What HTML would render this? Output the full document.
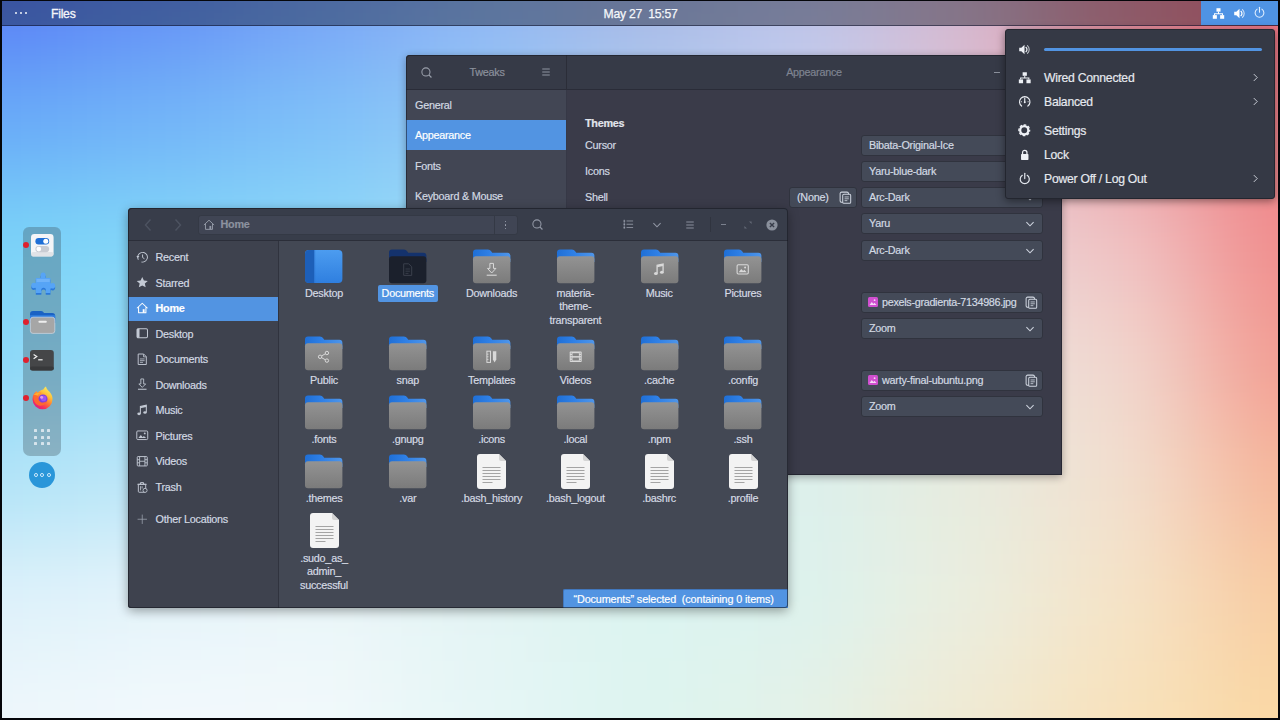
<!DOCTYPE html><html><head><meta charset="utf-8"><title>Desktop</title><style>
*{box-sizing:border-box;margin:0;padding:0}
html,body{width:1280px;height:720px;overflow:hidden;background:#05060a}
body{position:relative;font-family:"Liberation Sans",sans-serif;color:#d3dae3;font-size:10.8px;letter-spacing:-.25px;line-height:14px;-webkit-text-stroke:.18px}
body>*{position:absolute}
.b{position:absolute}
.t{position:absolute;white-space:nowrap;line-height:14px;height:14px}
.c{transform:translateX(-50%);text-align:center}
.s{font-size:12.2px;letter-spacing:-.25px;color:#e6e9ef}
#wall{left:2px;top:1px;width:1276px;height:717px;overflow:hidden}
svg{display:block;overflow:visible}
.ic{position:absolute}
.cb{position:absolute;left:861px;width:182px;height:21px;background:#444a58;border:1px solid #30343f;border-radius:3px}
.dim{color:#8c919d}
</style></head><body>
<svg width="0" height="0" style="left:0;top:0"><defs><linearGradient id="gfb" x1="0" y1="0" x2="0" y2="1"><stop offset="0" stop-color="#939393"/><stop offset="1" stop-color="#7b7b7b"/></linearGradient><linearGradient id="gft" x1="0" y1="0" x2="1" y2="0"><stop offset="0" stop-color="#1f6fd6"/><stop offset=".45" stop-color="#2f80e6"/><stop offset="1" stop-color="#4f95e8"/></linearGradient><linearGradient id="gdk" x1="0" y1="0" x2="0" y2="1"><stop offset="0" stop-color="#4c9cf0"/><stop offset="1" stop-color="#2f7fdf"/></linearGradient></defs></svg>
<svg id="wall" width="1276" height="717" viewBox="2 1 1276 717" preserveAspectRatio="none"><defs><filter id="wb" x="-10%" y="-10%" width="120%" height="120%" color-interpolation-filters="sRGB"><feGaussianBlur stdDeviation="58 44"/></filter></defs><g filter="url(#wb)"><rect x="-300" y="-300" width="381" height="361" fill="#5a80f6"/><rect x="80" y="-300" width="161" height="361" fill="#6490f6"/><rect x="240" y="-300" width="161" height="361" fill="#78a4f6"/><rect x="400" y="-300" width="161" height="361" fill="#90b6f4"/><rect x="560" y="-300" width="161" height="361" fill="#a6b8e6"/><rect x="720" y="-300" width="161" height="361" fill="#bcc4ea"/><rect x="880" y="-300" width="161" height="361" fill="#d4b8d0"/><rect x="1040" y="-300" width="161" height="361" fill="#e08c9c"/><rect x="1200" y="-300" width="381" height="361" fill="#e87080"/><rect x="-300" y="60" width="381" height="121" fill="#68aaf8"/><rect x="80" y="60" width="161" height="121" fill="#72b4f8"/><rect x="240" y="60" width="161" height="121" fill="#7ec0f8"/><rect x="400" y="60" width="161" height="121" fill="#94caf6"/><rect x="560" y="60" width="161" height="121" fill="#b2cef0"/><rect x="720" y="60" width="161" height="121" fill="#c6d0ee"/><rect x="880" y="60" width="161" height="121" fill="#dcc6d8"/><rect x="1040" y="60" width="161" height="121" fill="#ea9ca4"/><rect x="1200" y="60" width="381" height="121" fill="#ee8088"/><rect x="-300" y="180" width="381" height="121" fill="#7ad3f8"/><rect x="80" y="180" width="161" height="121" fill="#82d6f8"/><rect x="240" y="180" width="161" height="121" fill="#8cd8f8"/><rect x="400" y="180" width="161" height="121" fill="#a0dcf6"/><rect x="560" y="180" width="161" height="121" fill="#c0dcf0"/><rect x="720" y="180" width="161" height="121" fill="#d4dcec"/><rect x="880" y="180" width="161" height="121" fill="#e8d4d8"/><rect x="1040" y="180" width="161" height="121" fill="#f0c3c4"/><rect x="1200" y="180" width="381" height="121" fill="#f08c8c"/><rect x="-300" y="300" width="381" height="121" fill="#8cd8f8"/><rect x="80" y="300" width="161" height="121" fill="#98dcf8"/><rect x="240" y="300" width="161" height="121" fill="#a8e0f6"/><rect x="400" y="300" width="161" height="121" fill="#bce2f2"/><rect x="560" y="300" width="161" height="121" fill="#d0e6f0"/><rect x="720" y="300" width="161" height="121" fill="#dce6ec"/><rect x="880" y="300" width="161" height="121" fill="#e8e0dc"/><rect x="1040" y="300" width="161" height="121" fill="#f1d8d0"/><rect x="1200" y="300" width="381" height="121" fill="#f29c92"/><rect x="-300" y="420" width="381" height="121" fill="#b2e4f8"/><rect x="80" y="420" width="161" height="121" fill="#bee7f8"/><rect x="240" y="420" width="161" height="121" fill="#cceaf6"/><rect x="400" y="420" width="161" height="121" fill="#d0ecf2"/><rect x="560" y="420" width="161" height="121" fill="#d8f0f0"/><rect x="720" y="420" width="161" height="121" fill="#dcf0ec"/><rect x="880" y="420" width="161" height="121" fill="#e6ecdf"/><rect x="1040" y="420" width="161" height="121" fill="#f2e0d0"/><rect x="1200" y="420" width="381" height="121" fill="#f5b69a"/><rect x="-300" y="540" width="381" height="121" fill="#def1fa"/><rect x="80" y="540" width="161" height="121" fill="#e6f4fa"/><rect x="240" y="540" width="161" height="121" fill="#ebf6f9"/><rect x="400" y="540" width="161" height="121" fill="#e4f4f4"/><rect x="560" y="540" width="161" height="121" fill="#dcf4f0"/><rect x="720" y="540" width="161" height="121" fill="#dcf2ee"/><rect x="880" y="540" width="161" height="121" fill="#eaeee0"/><rect x="1040" y="540" width="161" height="121" fill="#f5e4c8"/><rect x="1200" y="540" width="381" height="121" fill="#f8cca2"/><rect x="-300" y="660" width="381" height="361" fill="#eef7fb"/><rect x="80" y="660" width="161" height="361" fill="#f2f9fc"/><rect x="240" y="660" width="161" height="361" fill="#f2f9fb"/><rect x="400" y="660" width="161" height="361" fill="#e6f6f6"/><rect x="560" y="660" width="161" height="361" fill="#ddf4f0"/><rect x="720" y="660" width="161" height="361" fill="#e4f2e8"/><rect x="880" y="660" width="161" height="361" fill="#f0ead4"/><rect x="1040" y="660" width="161" height="361" fill="#f8e2bc"/><rect x="1200" y="660" width="381" height="361" fill="#fad8a4"/></g></svg>
<div class="b" style="left:2px;top:1px;width:1276px;height:25px;background:rgba(3,5,18,.375);border-bottom:1px solid rgba(8,12,40,.5)"></div>
<div class="b" style="left:1201px;top:1px;width:77px;height:24px;background:#4f93e4"></div>
<div class="b" style="left:14.5px;top:12px;width:2.4px;height:2.4px;background:#f2f4f8;border-radius:50%"></div>
<div class="b" style="left:19.5px;top:12px;width:2.4px;height:2.4px;background:#f2f4f8;border-radius:50%"></div>
<div class="b" style="left:24.5px;top:12px;width:2.4px;height:2.4px;background:#f2f4f8;border-radius:50%"></div>
<div class="t s" style="left:51px;top:6.699999999999999px;color:#f4f6fa;-webkit-text-stroke:.3px #f4f6fa">Files</div>
<div class="t s c" style="left:640.5px;top:6.699999999999999px;color:#f4f6fa;-webkit-text-stroke:.25px #f4f6fa">May 27&nbsp; 15:57</div>
<svg class="ic" style="left:1211.5px;top:6.5px;" width="13" height="13" viewBox="0 0 16 16"><g fill="#fff"><rect x="5.5" y="1.5" width="5" height="4.2"/><rect x="1" y="10" width="5" height="4.5"/><rect x="10" y="10" width="5" height="4.5"/><path d="M7.4 5.5h1.2v2.1h4.9v2.6h-1.2v-1.4H3.7v1.4H2.5V7.6h4.9z"/></g></svg>
<svg class="ic" style="left:1233.0px;top:6.5px;" width="13" height="13" viewBox="0 0 16 16"><path d="M1.5 5.8h2.6L8 2.2v11.6L4.1 10.2H1.5z" fill="#fff"/><path d="M9.8 5.3a3.6 3.6 0 0 1 0 5.4" fill="none" stroke="#fff" stroke-width="1.5" stroke-linecap="round"/><path d="M11.6 3.2a6.4 6.4 0 0 1 0 9.6" fill="none" stroke="#fff" stroke-width="1.3" stroke-linecap="round" opacity=".75"/></svg>
<svg class="ic" style="left:1253.0px;top:6.1px;" width="13" height="13" viewBox="0 0 16 16"><path d="M5.1 3.9a5.4 5.4 0 1 0 5.8 0" fill="none" stroke="#e4f0ff" stroke-width="1.3" stroke-linecap="round"/><path d="M8 1.6v6.2" stroke="#e4f0ff" stroke-width="1.3" stroke-linecap="round"/></svg>
<div class="b" style="left:406px;top:55px;width:656px;height:420px;background:#3a3b49;border-radius:4px 4px 0 0;box-shadow:0 2px 9px rgba(0,0,0,.33)"></div>
<div class="b" style="left:406px;top:55px;width:656px;height:35px;background:#363a47;border-bottom:1px solid #2a2c38;border-radius:4px 4px 0 0"></div>
<div class="b" style="left:406px;top:90px;width:160px;height:385px;background:#424654"></div>
<div class="b" style="left:566px;top:55px;width:1px;height:35px;background:#2b2d38"></div>
<div class="b" style="left:566px;top:90px;width:1px;height:385px;background:#363846"></div>
<div class="b" style="left:406px;top:120px;width:160px;height:30px;background:#5294e2"></div>
<svg class="ic" style="left:420.0px;top:65.5px;" width="13" height="13" viewBox="0 0 16 16"><circle cx="7.3" cy="7.3" r="5" fill="none" stroke="#9a9fab" stroke-width="1.3"/><path d="M10.9 10.9l3.2 3.2" stroke="#9a9fab" stroke-width="1.5"/></svg>
<div class="t c dim" style="left:487px;top:65px;">Tweaks</div>
<svg class="ic" style="left:540.0px;top:66.0px;" width="12" height="12" viewBox="0 0 16 16"><path d="M3 4h10M3 8h10M3 12h10" stroke="#9a9fab" stroke-width="1.2"/></svg>
<div class="t c dim" style="left:814px;top:65px;color:#7f8491">Appearance</div>
<div class="b" style="left:994px;top:72px;width:6px;height:1px;background:#8c919d"></div>
<div class="t " style="left:415px;top:98px;">General</div>
<div class="t " style="left:415px;top:128px;color:#fff">Appearance</div>
<div class="t " style="left:415px;top:158.5px;">Fonts</div>
<div class="t " style="left:415px;top:189px;">Keyboard &amp; Mouse</div>
<div class="t " style="left:585px;top:116px;font-weight:bold;color:#e1e5ec">Themes</div>
<div class="t " style="left:585px;top:138px;">Cursor</div>
<div class="t " style="left:585px;top:164px;">Icons</div>
<div class="t " style="left:585px;top:190px;">Shell</div>
<div class="b" style="left:861px;top:134.5px;width:182px;height:21px;background:#444a58;border:1px solid #30333e;border-radius:3px"></div>
<div class="t " style="left:869px;top:137.5px;">Bibata-Original-Ice</div>
<svg class="ic" style="left:1024.0px;top:139.5px;" width="12" height="12" viewBox="0 0 16 16"><path d="M3.2 5.6l4.8 4.8 4.8-4.8" fill="none" stroke="#cfd5df" stroke-width="1.4"/></svg>
<div class="b" style="left:861px;top:160.5px;width:182px;height:21px;background:#444a58;border:1px solid #30333e;border-radius:3px"></div>
<div class="t " style="left:869px;top:163.5px;">Yaru-blue-dark</div>
<svg class="ic" style="left:1024.0px;top:165.5px;" width="12" height="12" viewBox="0 0 16 16"><path d="M3.2 5.6l4.8 4.8 4.8-4.8" fill="none" stroke="#cfd5df" stroke-width="1.4"/></svg>
<div class="b" style="left:861px;top:186.5px;width:182px;height:21px;background:#444a58;border:1px solid #30333e;border-radius:3px"></div>
<div class="t " style="left:869px;top:189.5px;">Arc-Dark</div>
<svg class="ic" style="left:1024.0px;top:191.5px;" width="12" height="12" viewBox="0 0 16 16"><path d="M3.2 5.6l4.8 4.8 4.8-4.8" fill="none" stroke="#cfd5df" stroke-width="1.4"/></svg>
<div class="b" style="left:861px;top:213.0px;width:182px;height:21px;background:#444a58;border:1px solid #30333e;border-radius:3px"></div>
<div class="t " style="left:869px;top:216.0px;">Yaru</div>
<svg class="ic" style="left:1024.0px;top:218.0px;" width="12" height="12" viewBox="0 0 16 16"><path d="M3.2 5.6l4.8 4.8 4.8-4.8" fill="none" stroke="#cfd5df" stroke-width="1.4"/></svg>
<div class="b" style="left:861px;top:239.5px;width:182px;height:21px;background:#444a58;border:1px solid #30333e;border-radius:3px"></div>
<div class="t " style="left:869px;top:242.5px;">Arc-Dark</div>
<svg class="ic" style="left:1024.0px;top:244.5px;" width="12" height="12" viewBox="0 0 16 16"><path d="M3.2 5.6l4.8 4.8 4.8-4.8" fill="none" stroke="#cfd5df" stroke-width="1.4"/></svg>
<div class="b" style="left:789px;top:187.0px;width:68px;height:21px;background:#444a58;border:1px solid #30333e;border-radius:3px"></div>
<div class="t " style="left:797px;top:190.0px;">(None)</div>
<svg class="ic" style="left:839.0px;top:191.0px;" width="13" height="13" viewBox="0 0 14 14"><rect x="1.2" y="1.2" width="9" height="11" rx="1.6" fill="none" stroke="#cfd5df" stroke-width="1.1"/><rect x="4" y="3.6" width="8.6" height="9.6" rx="1.2" fill="#444a58" stroke="#cfd5df" stroke-width="1.1"/><path d="M6 6.4h4.6M6 8.4h4.6M6 10.4h3" stroke="#cfd5df" stroke-width=".9"/></svg>
<div class="b" style="left:861px;top:291.5px;width:182px;height:21px;background:#444a58;border:1px solid #30333e;border-radius:3px"></div>
<div class="b" style="left:868px;top:297px;width:10px;height:10px;background:#d04fd0;border-radius:1.5px"></div>
<svg class="ic" style="left:869px;top:298px" width="8" height="8" viewBox="0 0 8 8"><path d="M.5 7l2.3-3 1.6 2 1-1.2L7.5 7z" fill="#f6d8f6"/><circle cx="5.6" cy="2.2" r=".9" fill="#f6d8f6"/></svg>
<div class="t " style="left:882px;top:294.5px;letter-spacing:-.3px">pexels-gradienta-7134986.jpg</div>
<svg class="ic" style="left:1025.0px;top:295.5px;" width="13" height="13" viewBox="0 0 14 14"><rect x="1.2" y="1.2" width="9" height="11" rx="1.6" fill="none" stroke="#cfd5df" stroke-width="1.1"/><rect x="4" y="3.6" width="8.6" height="9.6" rx="1.2" fill="#444a58" stroke="#cfd5df" stroke-width="1.1"/><path d="M6 6.4h4.6M6 8.4h4.6M6 10.4h3" stroke="#cfd5df" stroke-width=".9"/></svg>
<div class="b" style="left:861px;top:318.0px;width:182px;height:21px;background:#444a58;border:1px solid #30333e;border-radius:3px"></div>
<div class="t " style="left:869px;top:321.0px;">Zoom</div>
<svg class="ic" style="left:1024.0px;top:323.0px;" width="12" height="12" viewBox="0 0 16 16"><path d="M3.2 5.6l4.8 4.8 4.8-4.8" fill="none" stroke="#cfd5df" stroke-width="1.4"/></svg>
<div class="b" style="left:861px;top:369.5px;width:182px;height:21px;background:#444a58;border:1px solid #30333e;border-radius:3px"></div>
<div class="b" style="left:868px;top:375px;width:10px;height:10px;background:#d04fd0;border-radius:1.5px"></div>
<svg class="ic" style="left:869px;top:376px" width="8" height="8" viewBox="0 0 8 8"><path d="M.5 7l2.3-3 1.6 2 1-1.2L7.5 7z" fill="#f6d8f6"/><circle cx="5.6" cy="2.2" r=".9" fill="#f6d8f6"/></svg>
<div class="t " style="left:882px;top:372.5px;">warty-final-ubuntu.png</div>
<svg class="ic" style="left:1025.0px;top:373.5px;" width="13" height="13" viewBox="0 0 14 14"><rect x="1.2" y="1.2" width="9" height="11" rx="1.6" fill="none" stroke="#cfd5df" stroke-width="1.1"/><rect x="4" y="3.6" width="8.6" height="9.6" rx="1.2" fill="#444a58" stroke="#cfd5df" stroke-width="1.1"/><path d="M6 6.4h4.6M6 8.4h4.6M6 10.4h3" stroke="#cfd5df" stroke-width=".9"/></svg>
<div class="b" style="left:861px;top:396.0px;width:182px;height:21px;background:#444a58;border:1px solid #30333e;border-radius:3px"></div>
<div class="t " style="left:869px;top:399.0px;">Zoom</div>
<svg class="ic" style="left:1024.0px;top:401.0px;" width="12" height="12" viewBox="0 0 16 16"><path d="M3.2 5.6l4.8 4.8 4.8-4.8" fill="none" stroke="#cfd5df" stroke-width="1.4"/></svg>
<div class="b" style="left:406px;top:55px;width:656px;height:420px;border-radius:4px 4px 0 0;box-shadow:inset 0 0 0 1px rgba(22,24,32,.55)"></div>
<div class="b" style="left:128px;top:208px;width:660px;height:400px;background:#434854;border-radius:4px 4px 3px 3px;box-shadow:0 3px 11px rgba(0,0,0,.36)"></div>
<div class="b" style="left:128px;top:208px;width:660px;height:33px;background:#383d4a;border-bottom:1px solid #2b2e39;border-radius:4px 4px 0 0"></div>
<div class="b" style="left:128px;top:241px;width:151px;height:367px;background:#3e424e;border-right:1px solid #30333e;border-radius:0 0 0 3px"></div>
<div class="b" style="left:128px;top:296.5px;width:150px;height:24px;background:#5294e2"></div>
<svg class="ic" style="left:142px;top:218px" width="12" height="14" viewBox="0 0 12 14"><path d="M8.5 1.5L3.5 7l5 5.5" fill="none" stroke="#4d5361" stroke-width="1.4"/></svg>
<svg class="ic" style="left:172px;top:218px" width="12" height="14" viewBox="0 0 12 14"><path d="M3.5 1.5L8.5 7l-5 5.5" fill="none" stroke="#4d5361" stroke-width="1.4"/></svg>
<div class="b" style="left:197.5px;top:214.5px;width:320px;height:20px;background:#404554;border:1px solid #343945;border-radius:3px"></div>
<div class="b" style="left:493.5px;top:215.5px;width:1px;height:18px;background:#343945"></div>
<svg class="ic" style="left:202.5px;top:218.5px;" width="12" height="12" viewBox="0 0 16 16"><path d="M1.2 8L8 1.6 14.8 8M3.3 6.6v7.2h9.4V6.6" fill="none" stroke="#9399a6" stroke-width="1.3" stroke-linejoin="round"/><rect x="8.6" y="9.2" width="2.4" height="4.6" fill="#9399a6"/></svg>
<div class="t " style="left:220.5px;top:217px;font-weight:bold;color:#8c929f">Home</div>
<div class="b" style="left:504.7px;top:220.5px;width:1.6px;height:1.6px;background:#a3a9b6;border-radius:1px"></div>
<div class="b" style="left:504.7px;top:224px;width:1.6px;height:1.6px;background:#a3a9b6;border-radius:1px"></div>
<div class="b" style="left:504.7px;top:227.5px;width:1.6px;height:1.6px;background:#a3a9b6;border-radius:1px"></div>
<svg class="ic" style="left:530.5px;top:218.0px;" width="13" height="13" viewBox="0 0 16 16"><circle cx="7.3" cy="7.3" r="5" fill="none" stroke="#9399a6" stroke-width="1.3"/><path d="M10.9 10.9l3.2 3.2" stroke="#9399a6" stroke-width="1.5"/></svg>
<svg class="ic" style="left:622.5px;top:218.95px;" width="11" height="10.5" viewBox="0 0 16 16"><path d="M5 3h10M5 8h10M5 13h10" stroke="#9399a6" stroke-width="1.3"/><path d="M1.5 1v14" stroke="#9399a6" stroke-width="1"/><rect x=".5" y="2" width="2.4" height="2.2" fill="#9399a6"/><rect x=".5" y="7" width="2.4" height="2.2" fill="#9399a6"/><rect x=".5" y="12" width="2.4" height="2.2" fill="#9399a6"/></svg>
<svg class="ic" style="left:651.0px;top:219.0px;" width="12" height="12" viewBox="0 0 16 16"><path d="M3.2 5.6l4.8 4.8 4.8-4.8" fill="none" stroke="#9399a6" stroke-width="1.4"/></svg>
<svg class="ic" style="left:683.5px;top:218.5px;" width="12" height="12" viewBox="0 0 16 16"><path d="M3 4h10M3 8h10M3 12h10" stroke="#9399a6" stroke-width="1.2"/></svg>
<div class="b" style="left:710px;top:217px;width:1px;height:15px;background:#30343f"></div>
<div class="b" style="left:721px;top:224px;width:5px;height:1.2px;background:#7b818e"></div>
<svg class="ic" style="left:744px;top:220.5px" width="8" height="8" viewBox="0 0 8 8"><path d="M5 .4H7.600V3zM3 7.600H.4V5z" fill="#646a77"/></svg>
<svg class="ic" style="left:766px;top:218.5px" width="12" height="12" viewBox="0 0 12 12"><circle cx="6" cy="6" r="5.6" fill="#8a909c"/><path d="M3.9 3.9l4.2 4.2M8.1 3.9L3.9 8.1" stroke="#383d4a" stroke-width="1.4"/></svg>
<svg class="ic" style="left:136.25px;top:250.75px;" width="12.5" height="12.5" viewBox="0 0 16 16"><circle cx="8.4" cy="8" r="6.2" fill="none" stroke="#c3c9d4" stroke-width="1.2" stroke-dasharray="33 6" transform="rotate(150 8.4 8)"/><path d="M8.4 4.4v3.9l2.4 1.6" fill="none" stroke="#c3c9d4" stroke-width="1.2"/><path d="M.4 6.4l2 2.6 2-2.6z" fill="#c3c9d4"/></svg>
<div class="t " style="left:155.5px;top:250px;">Recent</div>
<svg class="ic" style="left:136.25px;top:276.25px;" width="12.5" height="12.5" viewBox="0 0 16 16"><path d="M8 1.2l2.1 4.6 5 .5-3.8 3.3 1.1 4.9L8 12l-4.4 2.5 1.1-4.9L.9 6.3l5-.5z" fill="#c3c9d4"/></svg>
<div class="t " style="left:155.5px;top:275.5px;">Starred</div>
<svg class="ic" style="left:136.25px;top:302.05px;" width="12.5" height="12.5" viewBox="0 0 16 16"><path d="M1.2 8L8 1.6 14.8 8M3.3 6.6v7.2h9.4V6.6" fill="none" stroke="#fff" stroke-width="1.3" stroke-linejoin="round"/><rect x="8.6" y="9.2" width="2.4" height="4.6" fill="#fff"/></svg>
<div class="t " style="left:155.5px;top:301.3px;color:#fff;font-weight:bold">Home</div>
<svg class="ic" style="left:136.25px;top:327.45px;" width="12.5" height="12.5" viewBox="0 0 16 16"><rect x="1.3" y="2.3" width="13.4" height="11.4" rx="1.6" fill="none" stroke="#c3c9d4" stroke-width="1.3"/><rect x="1.3" y="2.3" width="3.2" height="11.4" fill="#c3c9d4"/></svg>
<div class="t " style="left:155.5px;top:326.7px;">Desktop</div>
<svg class="ic" style="left:136.25px;top:352.95px;" width="12.5" height="12.5" viewBox="0 0 16 16"><path d="M2.8 1.3h7l3.4 3.4v10H2.8z" fill="none" stroke="#c3c9d4" stroke-width="1.2"/><path d="M9.6 1.5v3.4h3.4" fill="none" stroke="#c3c9d4" stroke-width="1"/><path d="M5 7.6h6M5 9.8h6M5 12h4" stroke="#c3c9d4" stroke-width="1"/></svg>
<div class="t " style="left:155.5px;top:352.2px;">Documents</div>
<svg class="ic" style="left:136.25px;top:378.45px;" width="12.5" height="12.5" viewBox="0 0 16 16"><path d="M6.2 1.2h3.6v6.4h2.6L8 12 3.6 7.6h2.6z" fill="none" stroke="#c3c9d4" stroke-width="1.1" stroke-linejoin="round"/><path d="M2.5 14.4h11" stroke="#c3c9d4" stroke-width="1.3"/></svg>
<div class="t " style="left:155.5px;top:377.7px;">Downloads</div>
<svg class="ic" style="left:136.25px;top:403.95px;" width="12.5" height="12.5" viewBox="0 0 16 16"><path d="M5.6 12.4V3.2l7.6-1.6v9" fill="none" stroke="#c3c9d4" stroke-width="1.3"/><ellipse cx="3.9" cy="12.6" rx="2.2" ry="1.7" fill="#c3c9d4"/><ellipse cx="11.5" cy="10.9" rx="2.2" ry="1.7" fill="#c3c9d4"/><path d="M5.6 3.2l7.6-1.6v2.2L5.6 5.4z" fill="#c3c9d4"/></svg>
<div class="t " style="left:155.5px;top:403.2px;">Music</div>
<svg class="ic" style="left:136.25px;top:429.45px;" width="12.5" height="12.5" viewBox="0 0 16 16"><rect x="1" y="2.5" width="14" height="11" rx="1.3" fill="none" stroke="#c3c9d4" stroke-width="1.2"/><path d="M3 11.6l3.2-4 2.4 2.8 1.4-1.6 3 2.8z" fill="#c3c9d4"/><circle cx="11.2" cy="5.6" r="1.2" fill="#c3c9d4"/></svg>
<div class="t " style="left:155.5px;top:428.7px;">Pictures</div>
<svg class="ic" style="left:136.25px;top:454.95px;" width="12.5" height="12.5" viewBox="0 0 16 16"><rect x="1.6" y="2" width="12.8" height="12" rx="1" fill="none" stroke="#c3c9d4" stroke-width="1.2"/><path d="M4.6 2v12M11.4 2v12M1.6 6h3M1.6 10h3M11.4 6h3M11.4 10h3M4.6 8h6.8" stroke="#c3c9d4" stroke-width="1.1"/></svg>
<div class="t " style="left:155.5px;top:454.2px;">Videos</div>
<svg class="ic" style="left:136.25px;top:480.55px;" width="12.5" height="12.5" viewBox="0 0 16 16"><path d="M3 4.2h9.4v9.2a1 1 0 0 1-1 1H4a1 1 0 0 1-1-1zM1.8 4.2h11.8M5.8 4V2h3.8v2" fill="none" stroke="#c3c9d4" stroke-width="1.2"/><path d="M5.8 6.6v5.4M7.8 6.6v3" stroke="#c3c9d4" stroke-width="1"/><circle cx="11.6" cy="12" r="2.6" fill="#3e424e" stroke="#c3c9d4" stroke-width="1.1"/></svg>
<div class="t " style="left:155.5px;top:479.8px;">Trash</div>
<svg class="ic" style="left:136.25px;top:512.75px;" width="12.5" height="12.5" viewBox="0 0 16 16"><path d="M8 2v12M2 8h12" stroke="#9aa0ad" stroke-width="1"/></svg>
<div class="t " style="left:155.5px;top:512px;">Other Locations</div>
<svg class="ic" style="left:305px;top:250.2px" width="37.4" height="33" viewBox="0 0 37.4 33"><rect width="37.4" height="33" rx="4" fill="url(#gdk)"/><path d="M4 0h5v33H4a4 4 0 0 1-4-4V4a4 4 0 0 1 4-4z" fill="#1d5fb8"/><path d="M9 0h1.2v33H9z" fill="#2a6fcc" opacity=".6"/></svg>
<div class="t c" style="left:324px;top:286.0px;color:#d6dbe4">Desktop</div>
<svg class="ic" style="left:389.1px;top:249px" width="37.4" height="34.4" viewBox="0 0 37.4 34.4"><path d="M0 3.4Q0 .4 3 .4h12q2 0 3 1.6l1.2 1.7h15.2q3 0 3 3V13H0z" fill="#14326c"/><rect x="0" y="7.2" width="37.4" height="27" rx="3" fill="#1b202c"/><g transform="translate(18.7 20.6)"><path d="M-4-5.8h5l3 3v8.6h-8z" fill="none" stroke="#3a3f4c" stroke-width="1"/><path d="M-2.2-.6h4.4M-2.2 1.6h4.4M-2.2 3.8h3" stroke="#3a3f4c" stroke-width=".9"/></g></svg>
<div class="b" style="left:377.5px;top:285px;width:60.5px;height:17px;background:#5294e2;border-radius:2px"></div>
<div class="t c" style="left:407.8px;top:286.3px;color:#fff">Documents</div>
<svg class="ic" style="left:472.90000000000003px;top:249px" width="37.4" height="34.4" viewBox="0 0 37.4 34.4"><path d="M0 3.4Q0 .4 3 .4h12q2 0 3 1.6l1.2 1.7h15.2q3 0 3 3V13H0z" fill="url(#gft)"/><rect x="0" y="7.2" width="37.4" height="27" rx="3" fill="url(#gfb)"/><g transform="translate(18.7 20.6)"><path d="M-1.8-6.2h3.6v5h2.4L0 3.4l-4.2-4.6h2.4z" fill="none" stroke="#d9d9d9" stroke-width="1"/><path d="M-5 5.6H5" stroke="#d9d9d9" stroke-width="1.1"/></g></svg>
<div class="t c" style="left:491.6px;top:286.0px;color:#d6dbe4">Downloads</div>
<svg class="ic" style="left:556.6999999999999px;top:249px" width="37.4" height="34.4" viewBox="0 0 37.4 34.4"><path d="M0 3.4Q0 .4 3 .4h12q2 0 3 1.6l1.2 1.7h15.2q3 0 3 3V13H0z" fill="url(#gft)"/><rect x="0" y="7.2" width="37.4" height="27" rx="3" fill="url(#gfb)"/></svg>
<div class="t c" style="left:575.4px;top:286.0px;color:#d6dbe4">materia-</div>
<div class="t c" style="left:575.4px;top:299.4px;color:#d6dbe4">theme-</div>
<div class="t c" style="left:575.4px;top:312.8px;color:#d6dbe4">transparent</div>
<svg class="ic" style="left:640.5px;top:249px" width="37.4" height="34.4" viewBox="0 0 37.4 34.4"><path d="M0 3.4Q0 .4 3 .4h12q2 0 3 1.6l1.2 1.7h15.2q3 0 3 3V13H0z" fill="url(#gft)"/><rect x="0" y="7.2" width="37.4" height="27" rx="3" fill="url(#gfb)"/><g transform="translate(18.7 20.6)"><path d="M-2.6 3.6v-8l6-1.2v7.8" fill="none" stroke="#d9d9d9" stroke-width="1.3"/><path d="M-2.6-4.4l6-1.2v2l-6 1.2z" fill="#d9d9d9"/><ellipse cx="-3.8" cy="3.9" rx="1.9" ry="1.5" fill="#d9d9d9"/><ellipse cx="2.2" cy="2.7" rx="1.9" ry="1.5" fill="#d9d9d9"/></g></svg>
<div class="t c" style="left:659.2px;top:286.0px;color:#d6dbe4">Music</div>
<svg class="ic" style="left:724.3px;top:249px" width="37.4" height="34.4" viewBox="0 0 37.4 34.4"><path d="M0 3.4Q0 .4 3 .4h12q2 0 3 1.6l1.2 1.7h15.2q3 0 3 3V13H0z" fill="url(#gft)"/><rect x="0" y="7.2" width="37.4" height="27" rx="3" fill="url(#gfb)"/><g transform="translate(18.7 20.4)"><rect x="-5.6" y="-4.6" width="11.2" height="9.2" rx="1.2" fill="none" stroke="#d9d9d9" stroke-width="1.1"/><path d="M-4 2.8l2.6-3.2 1.8 2 1.2-1.2 2.4 2.4z" fill="#d9d9d9"/><circle cx="2.4" cy="-1.8" r="1" fill="#d9d9d9"/></g></svg>
<div class="t c" style="left:743px;top:286.0px;color:#d6dbe4">Pictures</div>
<svg class="ic" style="left:305.3px;top:336.3px" width="37.4" height="34.4" viewBox="0 0 37.4 34.4"><path d="M0 3.4Q0 .4 3 .4h12q2 0 3 1.6l1.2 1.7h15.2q3 0 3 3V13H0z" fill="url(#gft)"/><rect x="0" y="7.2" width="37.4" height="27" rx="3" fill="url(#gfb)"/><g transform="translate(18.7 20.8)" fill="none" stroke="#d9d9d9" stroke-width="1"><circle cx="-3.6" cy="0" r="1.7"/><circle cx="3.2" cy="-3.8" r="1.7"/><circle cx="3.2" cy="3.8" r="1.7"/><path d="M-2.1-.9l3.8-2.1M-2.1.9l3.8 2.1"/></g></svg>
<div class="t c" style="left:324px;top:373.0px;color:#d6dbe4">Public</div>
<svg class="ic" style="left:389.1px;top:336.3px" width="37.4" height="34.4" viewBox="0 0 37.4 34.4"><path d="M0 3.4Q0 .4 3 .4h12q2 0 3 1.6l1.2 1.7h15.2q3 0 3 3V13H0z" fill="url(#gft)"/><rect x="0" y="7.2" width="37.4" height="27" rx="3" fill="url(#gfb)"/></svg>
<div class="t c" style="left:407.8px;top:373.0px;color:#d6dbe4">snap</div>
<svg class="ic" style="left:472.90000000000003px;top:336.3px" width="37.4" height="34.4" viewBox="0 0 37.4 34.4"><path d="M0 3.4Q0 .4 3 .4h12q2 0 3 1.6l1.2 1.7h15.2q3 0 3 3V13H0z" fill="url(#gft)"/><rect x="0" y="7.2" width="37.4" height="27" rx="3" fill="url(#gfb)"/><g transform="translate(18.7 20.8)"><rect x="-4.8" y="-5.6" width="3.6" height="11.2" fill="none" stroke="#d9d9d9" stroke-width="1"/><path d="M-4.8-2.6h1.6M-4.8 0h1.6M-4.8 2.6h1.6" stroke="#d9d9d9" stroke-width=".8"/><path d="M1.2-5.6h3.4v8.2L2.9 5.8 1.2 2.6z" fill="#d9d9d9"/></g></svg>
<div class="t c" style="left:491.6px;top:373.0px;color:#d6dbe4">Templates</div>
<svg class="ic" style="left:556.6999999999999px;top:336.3px" width="37.4" height="34.4" viewBox="0 0 37.4 34.4"><path d="M0 3.4Q0 .4 3 .4h12q2 0 3 1.6l1.2 1.7h15.2q3 0 3 3V13H0z" fill="url(#gft)"/><rect x="0" y="7.2" width="37.4" height="27" rx="3" fill="url(#gfb)"/><g transform="translate(18.7 20.8)"><rect x="-6" y="-5.2" width="12" height="10.4" rx=".8" fill="#d9d9d9"/><rect x="-3.2" y="-3.6" width="6.4" height="2.9" fill="#858585"/><rect x="-3.2" y=".8" width="6.4" height="2.9" fill="#858585"/><path d="M-5-3.6h1M-5-1.2h1M-5 1.2h1M-5 3.6h1M4-3.6h1M4-1.2h1M4 1.2h1M4 3.6h1" stroke="#858585" stroke-width="1"/></g></svg>
<div class="t c" style="left:575.4px;top:373.0px;color:#d6dbe4">Videos</div>
<svg class="ic" style="left:640.5px;top:336.3px" width="37.4" height="34.4" viewBox="0 0 37.4 34.4"><path d="M0 3.4Q0 .4 3 .4h12q2 0 3 1.6l1.2 1.7h15.2q3 0 3 3V13H0z" fill="url(#gft)"/><rect x="0" y="7.2" width="37.4" height="27" rx="3" fill="url(#gfb)"/></svg>
<div class="t c" style="left:659.2px;top:373.0px;color:#d6dbe4">.cache</div>
<svg class="ic" style="left:724.3px;top:336.3px" width="37.4" height="34.4" viewBox="0 0 37.4 34.4"><path d="M0 3.4Q0 .4 3 .4h12q2 0 3 1.6l1.2 1.7h15.2q3 0 3 3V13H0z" fill="url(#gft)"/><rect x="0" y="7.2" width="37.4" height="27" rx="3" fill="url(#gfb)"/></svg>
<div class="t c" style="left:743px;top:373.0px;color:#d6dbe4">.config</div>
<svg class="ic" style="left:305.3px;top:395.3px" width="37.4" height="34.4" viewBox="0 0 37.4 34.4"><path d="M0 3.4Q0 .4 3 .4h12q2 0 3 1.6l1.2 1.7h15.2q3 0 3 3V13H0z" fill="url(#gft)"/><rect x="0" y="7.2" width="37.4" height="27" rx="3" fill="url(#gfb)"/></svg>
<div class="t c" style="left:324px;top:432.0px;color:#d6dbe4">.fonts</div>
<svg class="ic" style="left:389.1px;top:395.3px" width="37.4" height="34.4" viewBox="0 0 37.4 34.4"><path d="M0 3.4Q0 .4 3 .4h12q2 0 3 1.6l1.2 1.7h15.2q3 0 3 3V13H0z" fill="url(#gft)"/><rect x="0" y="7.2" width="37.4" height="27" rx="3" fill="url(#gfb)"/></svg>
<div class="t c" style="left:407.8px;top:432.0px;color:#d6dbe4">.gnupg</div>
<svg class="ic" style="left:472.90000000000003px;top:395.3px" width="37.4" height="34.4" viewBox="0 0 37.4 34.4"><path d="M0 3.4Q0 .4 3 .4h12q2 0 3 1.6l1.2 1.7h15.2q3 0 3 3V13H0z" fill="url(#gft)"/><rect x="0" y="7.2" width="37.4" height="27" rx="3" fill="url(#gfb)"/></svg>
<div class="t c" style="left:491.6px;top:432.0px;color:#d6dbe4">.icons</div>
<svg class="ic" style="left:556.6999999999999px;top:395.3px" width="37.4" height="34.4" viewBox="0 0 37.4 34.4"><path d="M0 3.4Q0 .4 3 .4h12q2 0 3 1.6l1.2 1.7h15.2q3 0 3 3V13H0z" fill="url(#gft)"/><rect x="0" y="7.2" width="37.4" height="27" rx="3" fill="url(#gfb)"/></svg>
<div class="t c" style="left:575.4px;top:432.0px;color:#d6dbe4">.local</div>
<svg class="ic" style="left:640.5px;top:395.3px" width="37.4" height="34.4" viewBox="0 0 37.4 34.4"><path d="M0 3.4Q0 .4 3 .4h12q2 0 3 1.6l1.2 1.7h15.2q3 0 3 3V13H0z" fill="url(#gft)"/><rect x="0" y="7.2" width="37.4" height="27" rx="3" fill="url(#gfb)"/></svg>
<div class="t c" style="left:659.2px;top:432.0px;color:#d6dbe4">.npm</div>
<svg class="ic" style="left:724.3px;top:395.3px" width="37.4" height="34.4" viewBox="0 0 37.4 34.4"><path d="M0 3.4Q0 .4 3 .4h12q2 0 3 1.6l1.2 1.7h15.2q3 0 3 3V13H0z" fill="url(#gft)"/><rect x="0" y="7.2" width="37.4" height="27" rx="3" fill="url(#gfb)"/></svg>
<div class="t c" style="left:743px;top:432.0px;color:#d6dbe4">.ssh</div>
<svg class="ic" style="left:305.3px;top:454.3px" width="37.4" height="34.4" viewBox="0 0 37.4 34.4"><path d="M0 3.4Q0 .4 3 .4h12q2 0 3 1.6l1.2 1.7h15.2q3 0 3 3V13H0z" fill="url(#gft)"/><rect x="0" y="7.2" width="37.4" height="27" rx="3" fill="url(#gfb)"/></svg>
<div class="t c" style="left:324px;top:491.0px;color:#d6dbe4">.themes</div>
<svg class="ic" style="left:389.1px;top:454.3px" width="37.4" height="34.4" viewBox="0 0 37.4 34.4"><path d="M0 3.4Q0 .4 3 .4h12q2 0 3 1.6l1.2 1.7h15.2q3 0 3 3V13H0z" fill="url(#gft)"/><rect x="0" y="7.2" width="37.4" height="27" rx="3" fill="url(#gfb)"/></svg>
<div class="t c" style="left:407.8px;top:491.0px;color:#d6dbe4">.var</div>
<svg class="ic" style="left:477.1px;top:454.0px" width="29" height="35" viewBox="0 0 29 35"><path d="M3 0h19l7 7v25a3 3 0 0 1-3 3H3a3 3 0 0 1-3-3V3a3 3 0 0 1 3-3z" fill="#f3f3f3"/><path d="M22 0v5a2 2 0 0 0 2 2h5z" fill="#d4d4d4"/><path d="M5.5 13.5h18M5.5 16.5h18M5.5 19.5h18M5.5 22.5h18M5.5 25.5h18M5.5 28.5h10" stroke="#a4a4a4" stroke-width="1.1"/></svg>
<div class="t c" style="left:491.6px;top:491.0px;color:#d6dbe4">.bash_history</div>
<svg class="ic" style="left:560.9px;top:454.0px" width="29" height="35" viewBox="0 0 29 35"><path d="M3 0h19l7 7v25a3 3 0 0 1-3 3H3a3 3 0 0 1-3-3V3a3 3 0 0 1 3-3z" fill="#f3f3f3"/><path d="M22 0v5a2 2 0 0 0 2 2h5z" fill="#d4d4d4"/><path d="M5.5 13.5h18M5.5 16.5h18M5.5 19.5h18M5.5 22.5h18M5.5 25.5h18M5.5 28.5h10" stroke="#a4a4a4" stroke-width="1.1"/></svg>
<div class="t c" style="left:575.4px;top:491.0px;color:#d6dbe4">.bash_logout</div>
<svg class="ic" style="left:644.7px;top:454.0px" width="29" height="35" viewBox="0 0 29 35"><path d="M3 0h19l7 7v25a3 3 0 0 1-3 3H3a3 3 0 0 1-3-3V3a3 3 0 0 1 3-3z" fill="#f3f3f3"/><path d="M22 0v5a2 2 0 0 0 2 2h5z" fill="#d4d4d4"/><path d="M5.5 13.5h18M5.5 16.5h18M5.5 19.5h18M5.5 22.5h18M5.5 25.5h18M5.5 28.5h10" stroke="#a4a4a4" stroke-width="1.1"/></svg>
<div class="t c" style="left:659.2px;top:491.0px;color:#d6dbe4">.bashrc</div>
<svg class="ic" style="left:728.5px;top:454.0px" width="29" height="35" viewBox="0 0 29 35"><path d="M3 0h19l7 7v25a3 3 0 0 1-3 3H3a3 3 0 0 1-3-3V3a3 3 0 0 1 3-3z" fill="#f3f3f3"/><path d="M22 0v5a2 2 0 0 0 2 2h5z" fill="#d4d4d4"/><path d="M5.5 13.5h18M5.5 16.5h18M5.5 19.5h18M5.5 22.5h18M5.5 25.5h18M5.5 28.5h10" stroke="#a4a4a4" stroke-width="1.1"/></svg>
<div class="t c" style="left:743px;top:491.0px;color:#d6dbe4">.profile</div>
<svg class="ic" style="left:309.5px;top:513.3px" width="29" height="35" viewBox="0 0 29 35"><path d="M3 0h19l7 7v25a3 3 0 0 1-3 3H3a3 3 0 0 1-3-3V3a3 3 0 0 1 3-3z" fill="#f3f3f3"/><path d="M22 0v5a2 2 0 0 0 2 2h5z" fill="#d4d4d4"/><path d="M5.5 13.5h18M5.5 16.5h18M5.5 19.5h18M5.5 22.5h18M5.5 25.5h18M5.5 28.5h10" stroke="#a4a4a4" stroke-width="1.1"/></svg>
<div class="t c" style="left:324px;top:551.0px;color:#d6dbe4">.sudo_as_</div>
<div class="t c" style="left:324px;top:564.4px;color:#d6dbe4">admin_</div>
<div class="t c" style="left:324px;top:577.8px;color:#d6dbe4">successful</div>
<div class="b" style="left:562.5px;top:588.5px;width:225.5px;height:19.5px;background:#5294e2;border-radius:2px 0 0 0;border-top:1px solid #4177bd;border-left:1px solid #4177bd"></div>
<div class="t " style="left:573.5px;top:591.5px;color:#fff;letter-spacing:-.12px">“Documents” selected&nbsp; (containing 0 items)</div>
<div class="b" style="left:128px;top:208px;width:660px;height:400px;border-radius:4px 4px 3px 3px;box-shadow:inset 0 0 0 1px rgba(22,24,32,.6)"></div>
<div class="b" style="left:1005px;top:29px;width:270px;height:170px;background:#353945;border:1px solid #23262f;border-radius:3px;box-shadow:0 2px 8px rgba(0,0,0,.45)"></div>
<svg class="ic" style="left:1018.0px;top:43.1px;" width="13" height="13" viewBox="0 0 16 16"><path d="M1.5 5.8h2.6L8 2.2v11.6L4.1 10.2H1.5z" fill="#eef1f6"/><path d="M9.8 5.3a3.6 3.6 0 0 1 0 5.4" fill="none" stroke="#eef1f6" stroke-width="1.5" stroke-linecap="round"/><path d="M11.6 3.2a6.4 6.4 0 0 1 0 9.6" fill="none" stroke="#eef1f6" stroke-width="1.3" stroke-linecap="round" opacity=".75"/></svg>
<div class="b" style="left:1044px;top:48px;width:218px;height:3px;background:#5294e2;border-radius:1.5px"></div>
<svg class="ic" style="left:1017.75px;top:70.75px;" width="13.5" height="13.5" viewBox="0 0 16 16"><g fill="#eef1f6"><rect x="5.5" y="1.5" width="5" height="4.2"/><rect x="1" y="10" width="5" height="4.5"/><rect x="10" y="10" width="5" height="4.5"/><path d="M7.4 5.5h1.2v2.1h4.9v2.6h-1.2v-1.4H3.7v1.4H2.5V7.6h4.9z"/></g></svg>
<div class="t s" style="left:1044px;top:70.5px;">Wired Connected</div>
<svg class="ic" style="left:1250.0px;top:72.0px;" width="11" height="11" viewBox="0 0 16 16"><path d="M5.5 3l5 5-5 5" fill="none" stroke="#d9dde5" stroke-width="1.3"/></svg>
<svg class="ic" style="left:1017.75px;top:94.75px;" width="13.5" height="13.5" viewBox="0 0 16 16"><path d="M4.3 13.1a6.2 6.2 0 1 1 7.4 0" fill="none" stroke="#eef1f6" stroke-width="1.3" stroke-linecap="round"/><path d="M8 3.6v4.6" stroke="#eef1f6" stroke-width="1.3" stroke-linecap="round"/><circle cx="8" cy="8.6" r="1.1" fill="#eef1f6"/><path d="M3.4 8h1.2M11.4 8h1.2" stroke="#eef1f6" stroke-width="1.1"/></svg>
<div class="t s" style="left:1044px;top:94.5px;">Balanced</div>
<svg class="ic" style="left:1250.0px;top:96.0px;" width="11" height="11" viewBox="0 0 16 16"><path d="M5.5 3l5 5-5 5" fill="none" stroke="#d9dde5" stroke-width="1.3"/></svg>
<svg class="ic" style="left:1017.25px;top:123.25px;" width="14.5" height="14.5" viewBox="0 0 16 16"><circle cx="8" cy="8" r="4.5" fill="none" stroke="#eef1f6" stroke-width="2.5"/><circle cx="8" cy="8" r="6" fill="none" stroke="#eef1f6" stroke-width="1.3" stroke-dasharray="2.9 1.81" stroke-dashoffset="1.4"/></svg>
<div class="t s" style="left:1044px;top:123.5px;">Settings</div>
<svg class="ic" style="left:1017.75px;top:148.05px;" width="13.5" height="13.5" viewBox="0 0 16 16"><rect x="3.6" y="7.2" width="8.8" height="7" rx=".8" fill="#eef1f6"/><path d="M5.4 7.4V5.3a2.6 2.6 0 0 1 5.2 0v2.1" fill="none" stroke="#eef1f6" stroke-width="1.5"/></svg>
<div class="t s" style="left:1044px;top:147.8px;">Lock</div>
<svg class="ic" style="left:1017.75px;top:171.75px;" width="13.5" height="13.5" viewBox="0 0 16 16"><path d="M5.1 3.9a5.4 5.4 0 1 0 5.8 0" fill="none" stroke="#e3e7ee" stroke-width="1.4" stroke-linecap="round"/><path d="M8 1.6v6.2" stroke="#e3e7ee" stroke-width="1.4" stroke-linecap="round"/></svg>
<div class="t s" style="left:1044px;top:171.5px;">Power Off / Log Out</div>
<svg class="ic" style="left:1250.0px;top:173.0px;" width="11" height="11" viewBox="0 0 16 16"><path d="M5.5 3l5 5-5 5" fill="none" stroke="#d9dde5" stroke-width="1.3"/></svg>
<div class="b" style="left:23px;top:227px;width:38px;height:228.5px;background:rgba(58,76,84,.32);border-radius:6px 6px 7px 7px"></div>
<svg class="ic" style="left:30.8px;top:234px" width="22.6" height="22.6" viewBox="0 0 22.6 22.6"><rect width="22.6" height="22.6" rx="3.4" fill="#f4f5f7"/><rect x="0" y="18" width="22.6" height="4.6" rx="2.6" fill="#d9dbe0" opacity=".7"/><rect x="4.4" y="4" width="13.8" height="6.4" rx="3.2" fill="#1f6fd6"/><circle cx="14.8" cy="7.2" r="2.5" fill="#fff"/><rect x="4.4" y="12" width="13.8" height="6.2" rx="3.1" fill="#c9ccd3"/><circle cx="7.8" cy="15.1" r="2.4" fill="#fff"/></svg>
<svg class="ic" style="left:33.2px;top:272.3px" width="23.500" height="23" viewBox="0 0 23.500 23"><g transform="scale(.88 1)"><path d="M8.6 3.4a2.9 2.9 0 0 1 5.8 0c0 .8-.4 1.300-.4 1.800 0 .5.400.8 1 .8h4.800v4.400c0 .6.300 1 .8 1s1-.4 1.800-.4a2.800 2.800 0 0 1 0 5.600c-.8 0-1.300-.4-1.800-.4s-.8.400-.8 1V21h-4.600c-.6 0-.9-.3-.9-.8s.400-1 .4-1.800a2.700 2.700 0 0 0-5.400 0c0 .8.400 1.300.4 1.800s-.3.800-.9.800H3.200v-4.200c0-.6-.3-1-.8-1s-.9.400-1.600.400a2.700 2.700 0 0 1 0-5.400c.7 0 1.100.4 1.600.4s.8-.4.8-1V6h4.800c.6 0 1-.3 1-.8 0-.5-.4-1-.4-1.800z" fill="#2a78da" transform="translate(0 1.800)"/><path d="M8.6 3.4a2.9 2.9 0 0 1 5.8 0c0 .8-.4 1.300-.4 1.800 0 .5.400.8 1 .8h4.800v4.400c0 .6.300 1 .8 1s1-.4 1.800-.4a2.800 2.800 0 0 1 0 5.600c-.8 0-1.300-.4-1.800-.4s-.8.400-.8 1V21h-4.600c-.6 0-.9-.3-.9-.8s.400-1 .4-1.800a2.700 2.700 0 0 0-5.400 0c0 .8.400 1.300.4 1.800s-.3.800-.9.800H3.200v-4.200c0-.6-.3-1-.8-1s-.9.400-1.600.400a2.700 2.700 0 0 1 0-5.400c.7 0 1.100.4 1.600.4s.8-.4.8-1V6h4.800c.6 0 1-.3 1-.8 0-.5-.4-1-.4-1.800z" fill="#56a4f6"/><path d="M4 7h15v3H4z" fill="#86c0fb" opacity=".5"/></g></svg>
<svg class="ic" style="left:29.700px;top:310.800px" width="25.200" height="22.800" viewBox="0 0 25.200 22.800"><path d="M0 3a3 3 0 0 1 3-3h8q1.500 0 2.300 1.100l.7 1h8.200a3 3 0 0 1 3 3V12H0z" fill="#1b62c4"/><path d="M0 4.200h25.200V10H0z" fill="#3584e4" opacity=".85"/><rect x=".4" y="6.200" width="24.400" height="16.200" rx="2.600" fill="#a6a6a6" stroke="#c6d2de" stroke-width=".8"/><rect x="8.400" y="9.800" width="8.400" height="1.900" rx=".95" fill="#eeeeee"/></svg>
<svg class="ic" style="left:30.3px;top:349.800px" width="23.800" height="20.600" viewBox="0 0 23.800 20.600"><rect width="23.800" height="20.600" rx="3" fill="#454648"/><rect y="16.600" width="23.800" height="4" rx="2" fill="#38393b"/><path d="M3.600 4.400l3.200 2.200-3.200 2.200" fill="none" stroke="#f2f2f2" stroke-width="1.200"/><path d="M8.200 9.800h4.400" stroke="#f2f2f2" stroke-width="1.200"/></svg>
<svg class="ic" style="left:30.500px;top:386px" width="23" height="24.500" viewBox="0 0 23 24.500"><defs><linearGradient id="ffg" x1=".85" y1=".05" x2=".25" y2="1"><stop offset="0" stop-color="#f6f06a"/><stop offset=".3" stop-color="#ffc23a"/><stop offset=".55" stop-color="#ff7a32"/><stop offset=".8" stop-color="#f5305c"/><stop offset="1" stop-color="#d81a8c"/></linearGradient></defs><path d="M12.200 3.600c.700-1.400 1.700-2.600 2.800-3.200.300 2.200 1.800 3.600 3.300 5.200 2 2.100 3.200 4.500 3.200 7.400a10 10 0 0 1-20 .400c0-3.700 1.600-6.600 4.200-8.400.100.900.400 1.600.900 2.100 1.300-1.900 3.300-3.100 5.600-3.500z" fill="url(#ffg)"/><circle cx="12" cy="13" r="4.500" fill="#7e3be0"/><circle cx="12.600" cy="12.400" r="2.800" fill="#9a55f5"/><circle cx="10.600" cy="11.200" r="1.500" fill="#f0a8e8" opacity=".85"/><path d="M2.600 9.200c1.600-2.400 5-3.400 7.800-2.200-2 .500-3.200 1.700-3.500 3.300-.400 2.300.600 4.500 2.700 5.600 2.200 1.100 4.700.500 6.100-1.100-.500 3.100-3.300 5.200-6.600 4.900-4-.400-7.200-4.200-6.500-10.500z" fill="#ff6a2c" opacity=".92"/><path d="M2.600 9.200c1.600-2.400 5-3.400 7.800-2.200-1.800.400-3 1.400-3.400 2.800-1.500-.900-3.100-1-4.400-.600z" fill="#ffae2e"/></svg>
<div class="b" style="left:34.3px;top:429.3px;width:3px;height:3px;background:#d6e4ec;border-radius:.6px"></div>
<div class="b" style="left:40.699999999999996px;top:429.3px;width:3px;height:3px;background:#d6e4ec;border-radius:.6px"></div>
<div class="b" style="left:47.099999999999994px;top:429.3px;width:3px;height:3px;background:#d6e4ec;border-radius:.6px"></div>
<div class="b" style="left:34.3px;top:435.6px;width:3px;height:3px;background:#d6e4ec;border-radius:.6px"></div>
<div class="b" style="left:40.699999999999996px;top:435.6px;width:3px;height:3px;background:#d6e4ec;border-radius:.6px"></div>
<div class="b" style="left:47.099999999999994px;top:435.6px;width:3px;height:3px;background:#d6e4ec;border-radius:.6px"></div>
<div class="b" style="left:34.3px;top:441.90000000000003px;width:3px;height:3px;background:#d6e4ec;border-radius:.6px"></div>
<div class="b" style="left:40.699999999999996px;top:441.90000000000003px;width:3px;height:3px;background:#d6e4ec;border-radius:.6px"></div>
<div class="b" style="left:47.099999999999994px;top:441.90000000000003px;width:3px;height:3px;background:#d6e4ec;border-radius:.6px"></div>
<div class="b" style="left:23.2px;top:242px;width:6px;height:6px;background:#e0202e;border-radius:50%"></div>
<div class="b" style="left:23.2px;top:319px;width:6px;height:6px;background:#e0202e;border-radius:50%"></div>
<div class="b" style="left:23.2px;top:356.5px;width:6px;height:6px;background:#e0202e;border-radius:50%"></div>
<div class="b" style="left:23.2px;top:395px;width:6px;height:6px;background:#e0202e;border-radius:50%"></div>
<div class="b" style="left:29.3px;top:462.2px;width:25.8px;height:25.8px;background:#2a96d9;border-radius:50%"></div>
<div class="b" style="left:34.0px;top:473.3px;width:3.8px;height:3.8px;border:1px solid #d8efff;border-radius:50%"></div>
<div class="b" style="left:40.4px;top:473.3px;width:3.8px;height:3.8px;border:1px solid #d8efff;border-radius:50%"></div>
<div class="b" style="left:46.8px;top:473.3px;width:3.8px;height:3.8px;border:1px solid #d8efff;border-radius:50%"></div>
</body></html>
